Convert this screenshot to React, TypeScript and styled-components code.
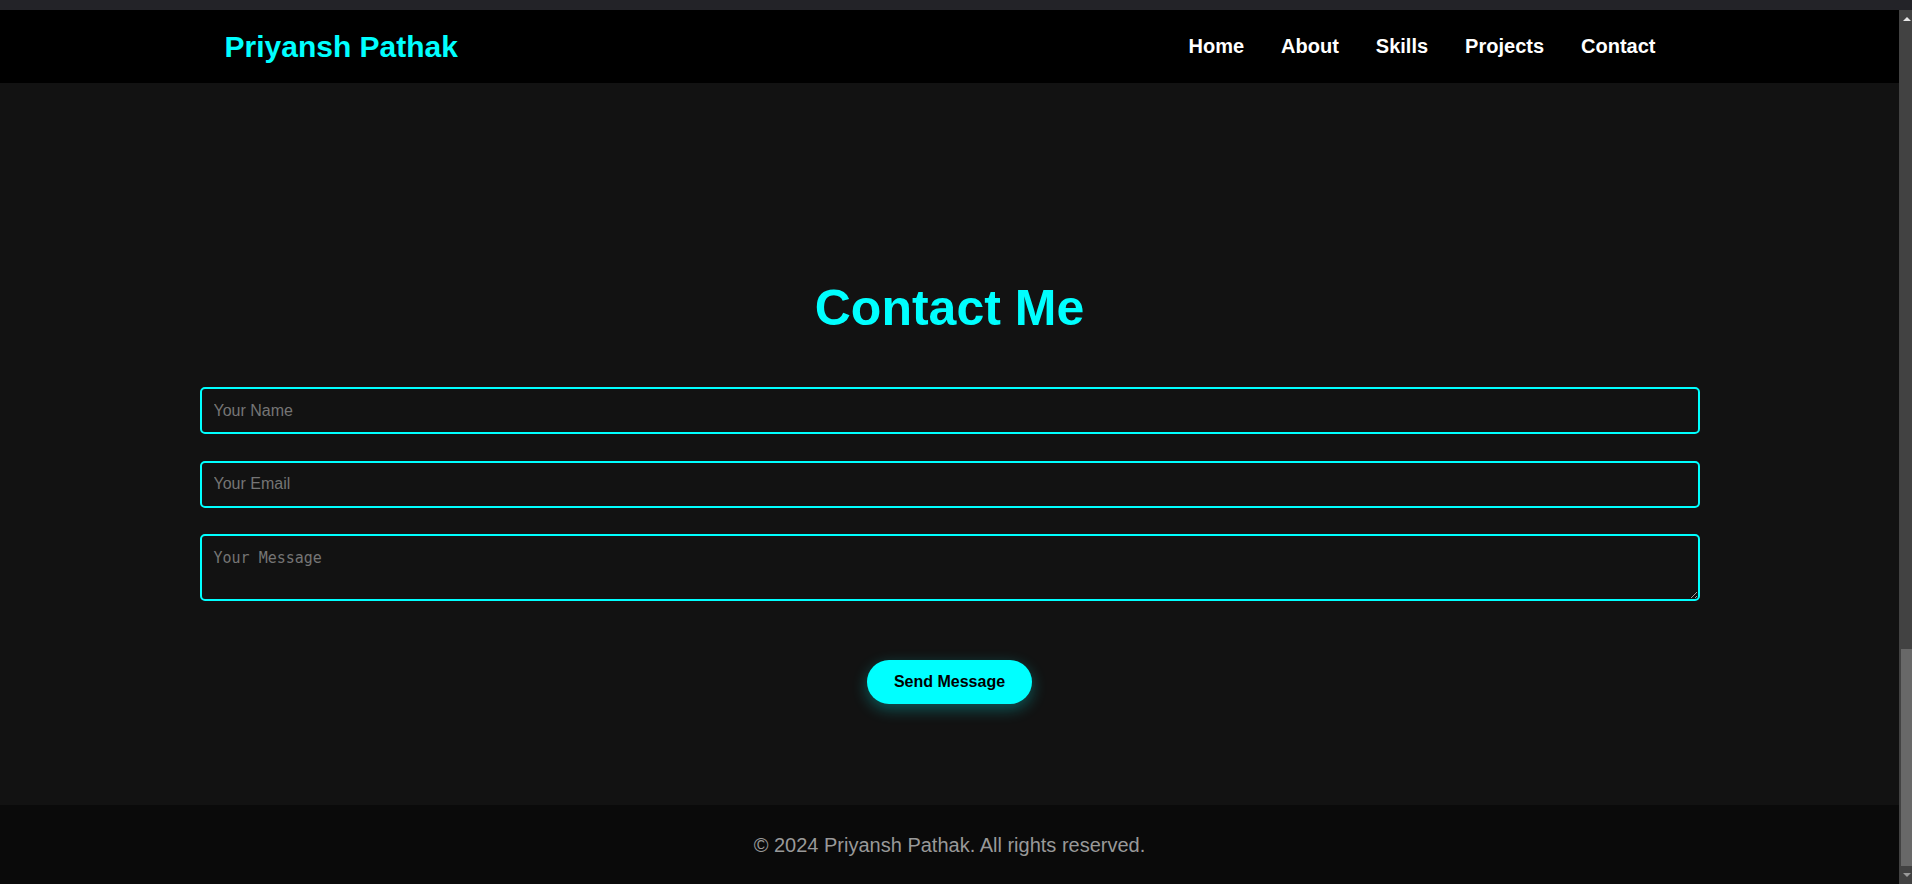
import styled, { createGlobalStyle } from 'styled-components';

const CYAN = '#00ffff';

const GlobalStyle = createGlobalStyle`
  * {
    box-sizing: border-box;
  }

  html, body {
    margin: 0;
    padding: 0;
    overflow: hidden;
    background-color: #121212;
    font-family: "Liberation Sans", Arial, sans-serif;
  }
`;

const Screen = styled.div`
  display: flex;
  flex-direction: column;
  width: 1912px;
  height: 884px;
`;
const BrowserStrip = styled.div`
  height: 10px;
  flex-shrink: 0;
  background-color: #232328;
`;
const Viewport = styled.div`
  display: flex;
  flex: 1;
  min-height: 0;
`;
const Page = styled.div`
  display: flex;
  flex-direction: column;
  flex: 1;
  min-width: 0;
  background-color: #121212;
  overflow: hidden;
`;

// fake window scrollbar, scrolled down to the bottom
const Scrollbar = styled.div`
  display: flex;
  flex-direction: column;
  width: 13px;
  flex-shrink: 0;
  background-color: #424242;
`;
const ScrollArrow = styled.div<{ $down?: boolean }>`
  display: flex;
  align-items: center;
  justify-content: center;
  height: ${(props) => (props.$down ? 18 : 17)}px;
  flex-shrink: 0;

  &::before {
    content: '';
    border-left: 4px solid transparent;
    border-right: 4px solid transparent;
    ${(props) =>
      props.$down
        ? `border-top: 4px solid #9a9a9a; margin-left: 2px;`
        : `border-bottom: 4px solid #e8e8e8; margin-left: 2px;`}
  }
`;
const ScrollTrack = styled.div`
  display: flex;
  flex-direction: column;
  justify-content: flex-end;
  flex: 1;
  padding-left: 2px;
`;
const ScrollThumb = styled.div`
  height: 217px;
  background-color: #686868;
`;

const Navbar = styled.nav`
  height: 73px;
  flex-shrink: 0;
  background-color: #000;
`;
const NavInner = styled.div`
  display: flex;
  align-items: center;
  justify-content: space-between;
  max-width: 1500px;
  height: 100%;
  margin: 0 auto;
  padding: 0 25.5px 0 25px;
`;
const Brand = styled.a`
  color: ${CYAN};
  font-size: 30px;
  font-weight: bold;
  text-decoration: none;
`;
const NavLinks = styled.ul`
  display: flex;
  margin: 0;
  padding: 0;
  list-style: none;
`;
const NavLink = styled.a`
  display: block;
  padding: 0 18.5px;
  color: #fff;
  font-size: 20px;
  font-weight: bold;
  text-decoration: none;
`;

const ContactSection = styled.section`
  flex: 1;
  padding-top: 197px;
`;
const Container = styled.div`
  max-width: 1500px;
  margin: 0 auto;
`;
const Title = styled.h2`
  margin: 0 0 51px;
  color: ${CYAN};
  font-size: 50px;
  line-height: 56px;
  font-weight: bold;
  text-align: center;
`;
const Form = styled.form`
  display: flex;
  flex-direction: column;
  gap: 26.5px;
`;
const fieldStyle = `
  width: 100%;
  padding: 12px;
  border: 2px solid ${CYAN};
  border-radius: 5px;
  background-color: transparent;
  color: #fff;
  outline: none;

  &::placeholder {
    color: #757575;
  }
`;
const Input = styled.input`
  ${fieldStyle}
  height: 47px;
  font-family: "Liberation Sans", Arial, sans-serif;
  font-size: 16px;
`;
const TextArea = styled.textarea`
  ${fieldStyle}
  display: block;
  height: 67px;
  padding-top: 13px;
  font-family: "DejaVu Sans Mono", monospace;
  font-size: 15px;
`;
const SendButton = styled.button`
  align-self: center;
  margin-top: 32.5px;
  height: 44px;
  padding: 0 27px;
  border: none;
  border-radius: 22px;
  background-color: ${CYAN};
  color: #000;
  font-family: "Liberation Sans", Arial, sans-serif;
  font-size: 16px;
  font-weight: bold;
  box-shadow: 0 5px 15px rgba(0, 255, 255, 0.3);
  cursor: pointer;
`;

const Footer = styled.footer`
  height: 79px;
  flex-shrink: 0;
  padding: 29px 0 27px;
  background-color: #0a0a0a;
  color: #999;
  font-size: 20px;
  line-height: 23px;
  text-align: center;
`;

const links = ['Home', 'About', 'Skills', 'Projects', 'Contact'];

export default function App() {
  return (
    <>
      <GlobalStyle />
      <Screen>
        <BrowserStrip />
        <Viewport>
          <Page>
            <Navbar>
              <NavInner>
                <Brand href="#home">Priyansh Pathak</Brand>
                <NavLinks>
                  {links.map((link) => (
                    <li key={link}>
                      <NavLink href={`#${link.toLowerCase()}`}>{link}</NavLink>
                    </li>
                  ))}
                </NavLinks>
              </NavInner>
            </Navbar>
            <ContactSection id="contact">
              <Container>
                <Title>Contact Me</Title>
                <Form onSubmit={(e) => e.preventDefault()}>
                  <Input type="text" placeholder="Your Name" />
                  <Input type="email" placeholder="Your Email" />
                  <TextArea placeholder="Your Message" />
                  <SendButton type="submit">Send Message</SendButton>
                </Form>
              </Container>
            </ContactSection>
            <Footer>© 2024 Priyansh Pathak. All rights reserved.</Footer>
          </Page>
          <Scrollbar>
            <ScrollArrow />
            <ScrollTrack>
              <ScrollThumb />
            </ScrollTrack>
            <ScrollArrow $down />
          </Scrollbar>
        </Viewport>
      </Screen>
    </>
  );
}
